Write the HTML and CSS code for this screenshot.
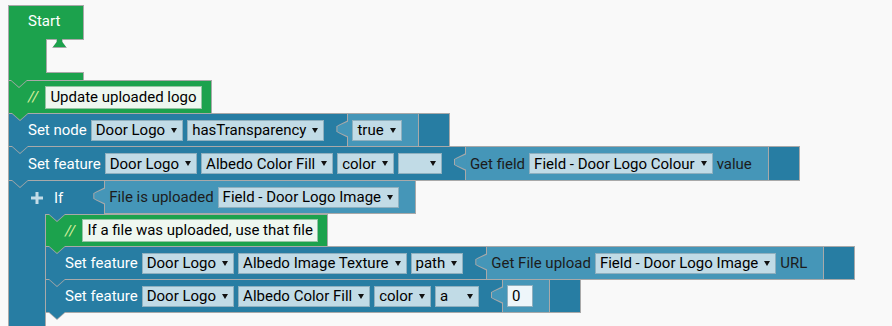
FILE: index.html
```html
<!DOCTYPE html>
<html lang="en">
<head>
    <meta charset="UTF-8">
    <meta name="viewport" content="width=device-width, initial-scale=1.0">
    <title>Door Logo rules</title>
    <link rel="stylesheet" href="styles.css">
</head>
<body>
    <div class="workspace">
        <div class="start">
            <div class="start-head">Start</div>
            <div class="start-mouth">
                <div class="start-arm"></div>
                <div class="start-slot"></div>
            </div>
            <div class="start-foot"></div>
        </div>

        <div class="stack">
            <div class="block comment">
                <span class="slashes">//</span>
                <span class="note">Update uploaded logo</span>
            </div>

            <div class="block">
                <span class="label">Set node</span>
                <span class="dd">Door Logo</span>
                <span class="dd">hasTransparency</span>
                <div class="value">
                    <span class="dd">true</span>
                </div>
                <div class="tail"></div>
            </div>

            <div class="block tall">
                <span class="label">Set feature</span>
                <span class="dd">Door Logo</span>
                <span class="dd">Albedo Color Fill</span>
                <span class="dd">color</span>
                <span class="dd min"></span>
                <div class="value">
                    <span class="label">Get field</span>
                    <span class="dd">Field - Door Logo Colour</span>
                    <span class="label">value</span>
                </div>
                <div class="tail"></div>
            </div>

            <div class="if">
                <div class="block if-head">
                    <svg class="plus" width="14" height="14" viewBox="0 0 14 14">
                        <path d="M7 1v12M1 7h12" stroke="#c3dce7" stroke-width="3" fill="none"/>
                    </svg>
                    <span class="label">If</span>
                    <div class="value">
                        <span class="label">File is uploaded</span>
                        <span class="dd">Field - Door Logo Image</span>
                    </div>
                </div>
                <div class="if-body">
                    <div class="if-arm"></div>
                    <div class="stack inner">
                        <div class="block comment short">
                            <span class="slashes">//</span>
                            <span class="note">If a file was uploaded, use that file</span>
                        </div>

                        <div class="block">
                            <span class="label">Set feature</span>
                            <span class="dd">Door Logo</span>
                            <span class="dd">Albedo Image Texture</span>
                            <span class="dd">path</span>
                            <div class="value">
                                <span class="label">Get File upload</span>
                                <span class="dd">Field - Door Logo Image</span>
                                <span class="label">URL</span>
                            </div>
                            <div class="tail"></div>
                        </div>

                        <div class="block">
                            <span class="label">Set feature</span>
                            <span class="dd">Door Logo</span>
                            <span class="dd">Albedo Color Fill</span>
                            <span class="dd">color</span>
                            <span class="dd min">a</span>
                            <div class="value">
                                <span class="num">0</span>
                            </div>
                            <div class="tail"></div>
                        </div>
                    </div>
                </div>
            </div>
        </div>
    </div>
</body>
</html>
```

FILE: styles.css
```css
html, body { margin: 0; height: 100%; overflow: hidden; }
body { background: #f9f9f9; font-family: Roboto, "Noto Sans", sans-serif; font-size: 15px; }
.workspace { padding: 5px 0 0 8px; }

/* start hat with its empty statement mouth */
.start { width: 76px; display: flex; flex-direction: column; }
.start-head { height: 34px; box-sizing: border-box; padding: 6px 0 0 19px; line-height: 18px; background: #1ca24d; color: #fff; border: 1px solid #a9a9a9; border-bottom: none; }
.start-mouth { display: flex; height: 34px; }
.start-arm { width: 37px; background: #1ca24d; border-left: 1px solid #a9a9a9; }
.start-slot { position: relative; flex: 1; border: 1px solid #a9a9a9; border-right: none; }
.start-slot::before, .start-slot::after { content: ""; position: absolute; top: -1px; clip-path: polygon(30% 0, 70% 0, 70% 35%, 100% 100%, 0 100%, 30% 35%); }
.start-slot::before { left: 5px; width: 15px; height: 9px; background: #a9a9a9; }
.start-slot::after { left: 6px; width: 13px; height: 8px; background: #1ca24d; }
.start-foot { position: relative; height: 8px; box-sizing: border-box; background: #1ca24d; border: 1px solid #a9a9a9; border-top: none; }

/* stacks of statement blocks */
.stack { display: flex; flex-direction: column; align-items: flex-start; }
.block { position: relative; display: flex; align-items: center; gap: 4px; height: 34px; box-sizing: border-box; margin-top: -1px; padding-left: 19px; background: #277da3; color: #fff; border: 1px solid #a9a9a9; }
.block.tall { height: 35px; }
.block.short { height: 33px; }

/* next-connection tab under every block */
.block::before, .block::after, .start-foot::before, .start-foot::after { content: ""; position: absolute; top: 100%; z-index: 1; clip-path: polygon(0 0, 100% 0, 50% 100%); }
.block::before, .start-foot::before { left: 2px; width: 18px; height: 8px; background: #a9a9a9; }
.block::after, .start-foot::after { left: 3px; width: 16px; height: 7px; background: #277da3; }
.start-foot::before { left: 1px; }
.start-foot::after { left: 2px; background: #1ca24d; }
.comment::after { background: #1ca24d; }

.comment { background: #1ca24d; padding-right: 9px; }
.slashes { font-style: italic; color: #d6ef9c; margin-right: 3px; }
.note { height: 23px; box-sizing: border-box; padding: 0 4px; line-height: 21px; background: #eef7f0; color: #000; border: 1px solid #96c4a4; }

.dd { display: flex; align-items: center; gap: 6px; height: 21px; box-sizing: border-box; padding: 0 5px 0 4px; background: #c1dbe6; color: #000; border: 1px solid #8fb0bf; white-space: nowrap; }
.dd::after { content: ""; margin-left: auto; border-left: 3.5px solid transparent; border-right: 3.5px solid transparent; border-top: 5px solid #111; }
.dd.min { min-width: 44px; }
.num { width: 26px; height: 22px; box-sizing: border-box; padding-left: 4px; line-height: 20px; background: #eef6fa; color: #000; border: 1px solid #8fb0bf; }

/* plugged-in value block with its puzzle tab */
.value { position: relative; display: flex; align-items: center; gap: 4px; align-self: stretch; margin-left: 19px; padding: 0 16px 0 4px; background: #4596b8; color: #1c1c1c; border-left: 1px solid #a9a9a9; border-right: 1px solid #a9a9a9; white-space: nowrap; }
.value::before, .value::after { content: ""; position: absolute; clip-path: polygon(100% 0, 25% 25%, 0 35%, 0 65%, 25% 75%, 100% 100%); }
.value::before { left: -12px; top: 6px; width: 12px; height: 18px; background: #a9a9a9; }
.value::after { left: -11px; top: 7px; width: 12px; height: 16px; background: #4596b8; }
.tail { width: 26px; align-self: stretch; }

/* if block */
.if { display: flex; flex-direction: column; align-items: flex-start; margin-top: -1px; }
.block.if-head { margin-top: 0; border-bottom: none; border-right: none; }
.block.if-head::before { left: 39px; }
.block.if-head::after { left: 40px; }
.plus { margin: 0 6px 0 2px; }
.if-head .value { margin-left: 37px; border-bottom: 1px solid #a9a9a9; }
.if-body { display: flex; }
.if-arm { width: 38px; box-sizing: border-box; background: #277da3; border-left: 1px solid #a9a9a9; border-right: 1px solid #a9a9a9; }
.stack.inner { margin-left: -1px; padding-bottom: 30px; }
.inner .block:first-child { margin-top: 0; }
```
